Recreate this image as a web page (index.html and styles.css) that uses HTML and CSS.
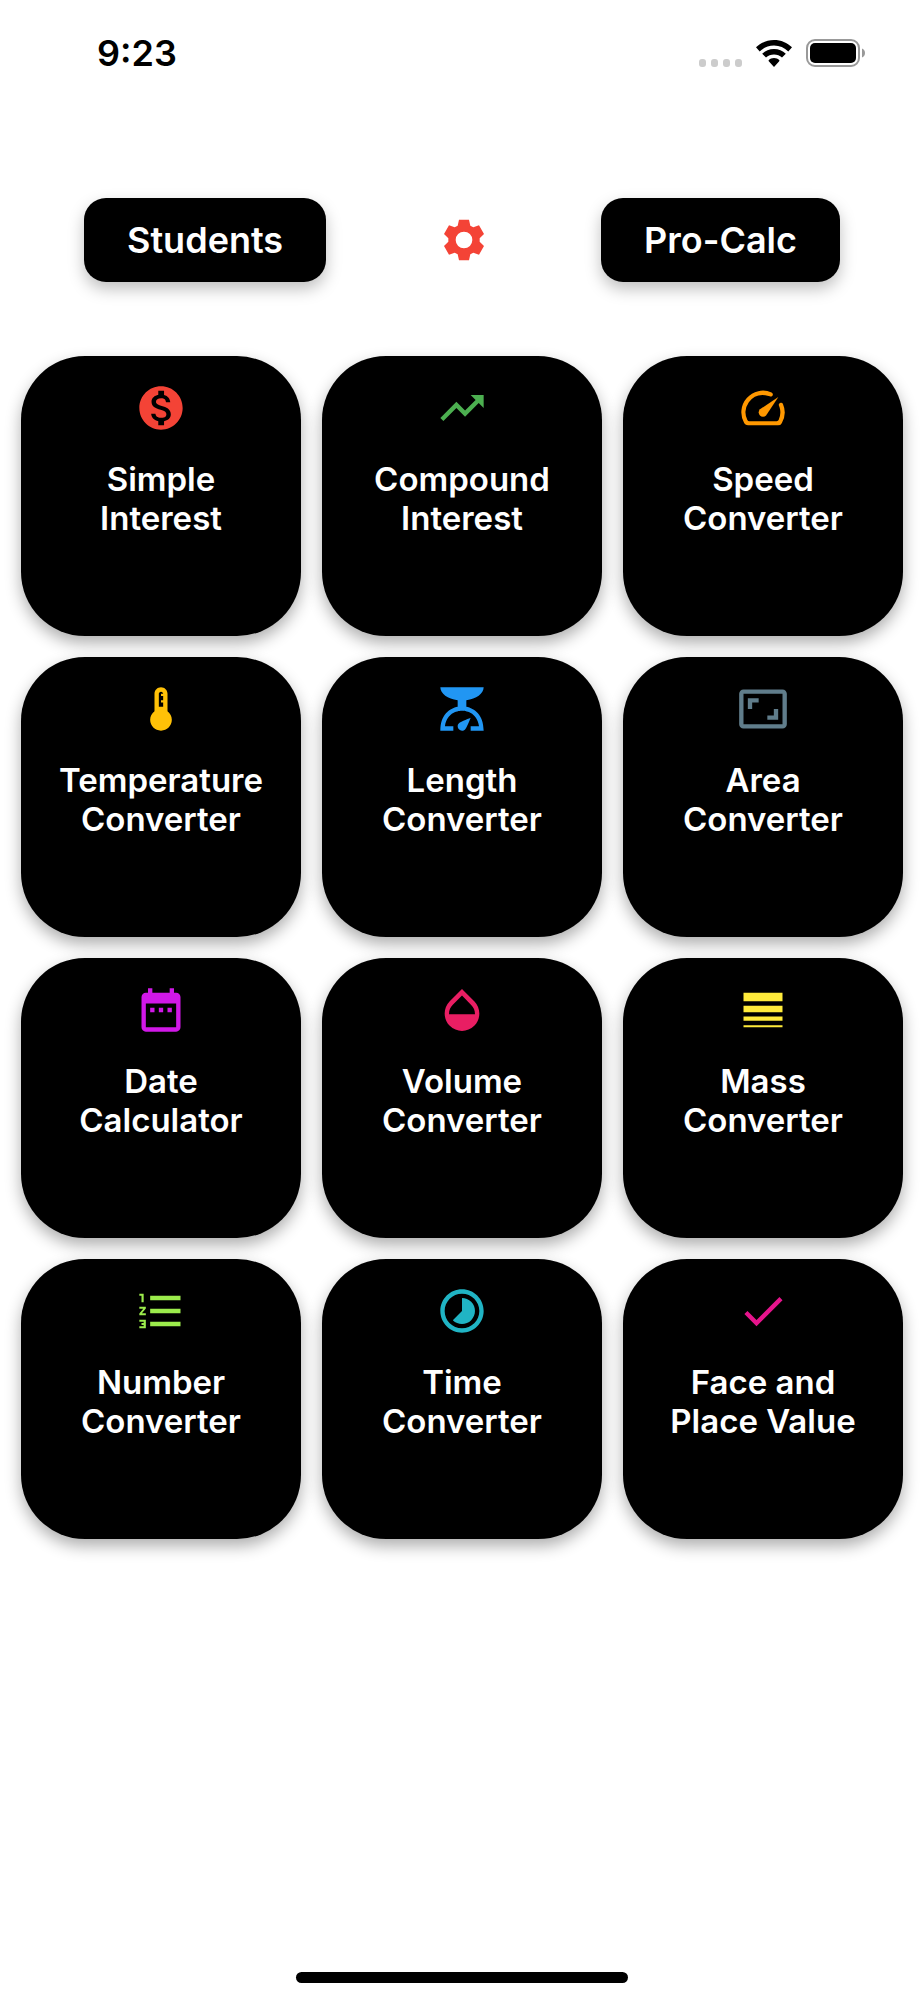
FILE: index.html
```html
<!DOCTYPE html>
<html lang="en">
<head>
    <meta charset="UTF-8">
    <meta name="viewport" content="width=device-width, initial-scale=1.0">
    <title>Calculators</title>
    <link rel="stylesheet" href="styles.css">
</head>
<body>
    <div class="screen">
        <header class="status-bar">
            <span class="time">9:23</span>
            <div class="status-icons">
                <div class="signal"><i></i><i></i><i></i><i></i></div>
                <svg class="wifi" viewBox="0 0 36 27" aria-hidden="true">
                    <path d="M18 0C11 0 4.800 2.700 0 7.300L3.700 11.400C7.500 7.800 12.500 5.600 18 5.600S28.500 7.800 32.300 11.400L36 7.300C31.200 2.700 25 0 18 0z"/>
                    <path d="M18 9C13.400 9 9.300 10.700 6.200 13.700L10 17.600C12.100 15.600 14.900 14.500 18 14.500S23.900 15.600 26 17.600L29.800 13.700C26.700 10.700 22.600 9 18 9z"/>
                    <path d="M18 18C15.900 18 14 18.800 12.600 20.200Q12.500 20.900 13 21.400L18 27L23 21.400Q23.500 20.900 23.400 20.200C22 18.800 20.100 18 18 18z"/>
                </svg>
                <svg class="battery" viewBox="0 0 60 28" aria-hidden="true">
                    <rect x="1" y="1" width="52" height="26" rx="8" fill="none" stroke="#999" stroke-width="2"/>
                    <rect x="4" y="4" width="46" height="20" rx="5"/>
                    <path d="M56 9.500c4 1.500 4 7.500 0 9z" fill="#999"/>
                </svg>
            </div>
        </header>

        <nav class="top-nav">
            <button type="button" class="btn-nav">Students</button>
            <button type="button" class="btn-settings" aria-label="Settings">
                <svg class="gear" viewBox="-66 -66 132 132"><path fill-rule="evenodd" d="M-19-43L-15-61H15L19-43L28-38L45-44L60-18L47-5V5L60 18L45 44L28 38L19 43L15 61H-15L-19 43L-28 38L-45 44L-60 18L-47 5V-5L-60-18L-45-44L-28-38zM0-25A25 25 0 0 0 0 25A25 25 0 0 0 0-25z"/></svg>
            </button>
            <button type="button" class="btn-nav">Pro-Calc</button>
        </nav>

        <main class="grid">
            <button type="button" class="card">
                <svg class="icon red" viewBox="0 0 24 24"><path d="M12 2C6.480 2 2 6.480 2 12s4.480 10 10 10 10-4.480 10-10S17.520 2 12 2zm1.410 16.090V20h-2.670v-1.930c-1.710-.36-3.160-1.460-3.270-3.400h1.960c.1 1.050.82 1.870 2.650 1.870 1.960 0 2.400-.98 2.400-1.590 0-.83-.44-1.610-2.670-2.140-2.480-.6-4.180-1.620-4.180-3.670 0-1.720 1.390-2.840 3.110-3.210V4h2.670v1.950c1.860.45 2.790 1.860 2.850 3.390H14.300c-.05-1.110-.64-1.870-2.220-1.870-1.500 0-2.400.68-2.400 1.640 0 .84.65 1.390 2.670 1.910s4.180 1.390 4.180 3.910c-.01 1.830-1.380 2.830-3.120 3.160z"/></svg>
                <span>Simple Interest</span>
            </button>
            <button type="button" class="card">
                <svg class="icon green" viewBox="0 0 24 24"><path d="M16 6l2.290 2.290-4.880 4.880-4-4L2 16.590 3.410 18l6-6 4 4 6.300-6.290L22 12V6z"/></svg>
                <span>Compound Interest</span>
            </button>
            <button type="button" class="card">
                <svg class="icon orange" viewBox="0 0 24 24"><path d="M19.460 10a1 1 0 0 0-.07 1 7.550 7.550 0 0 1 .52 1.810 8 8 0 0 1-.69 4.730 1 1 0 0 1-.89.53H5.680a1 1 0 0 1-.89-.54A8 8 0 0 1 13 6.060a7.690 7.690 0 0 1 2.110.56 1 1 0 0 0 1-.07 1 1 0 0 0-.17-1.760A10 10 0 0 0 3.350 19a2 2 0 0 0 1.720 1h13.850a2 2 0 0 0 1.740-1 10 10 0 0 0 .55-8.890 1 1 0 0 0-1.750-.11z"/><path d="M10.590 12.590a2 2 0 0 0 0 2.820 2 2 0 0 0 2.830 0l5.660-8.490z"/></svg>
                <span>Speed Converter</span>
            </button>
            <button type="button" class="card">
                <svg class="icon amber" viewBox="0 0 24 24"><path d="M15 13V5c0-1.660-1.340-3-3-3S9 3.340 9 5v8c-1.210.91-2 2.370-2 4 0 2.760 2.240 5 5 5s5-2.240 5-5c0-1.630-.79-3.090-2-4zm-4-8c0-.55.45-1 1-1s1 .45 1 1h-1v1h1v2h-1v1h1v2h-2V5z"/></svg>
                <span>Temperature Converter</span>
            </button>
            <button type="button" class="card">
                <svg class="icon blue" viewBox="0 0 24 24"><path d="M14 11V8c4.560-.58 8-3.100 8-6H2c0 2.900 3.440 5.420 8 6v3c-3.680.73-8 3.610-8 11h6v-2H4.130c.93-6.830 6.650-7.200 7.870-7.200s6.940.37 7.870 7.200H16v2h6c0-7.390-4.320-10.270-8-11z"/><path d="M12 22c-1.100 0-2-.9-2-2 0-.55.22-1.050.59-1.410C11.390 17.790 16 16 16 16s-1.790 4.610-2.590 5.410c-.36.37-.86.59-1.410.59z"/></svg>
                <span>Length Converter</span>
            </button>
            <button type="button" class="card">
                <svg class="icon slate" viewBox="0 0 24 24"><path d="M19 12h-2v3h-3v2h5v-5zM7 9h3V7H5v5h2V9zm14-6H3c-1.100 0-2 .9-2 2v14c0 1.100.9 2 2 2h18c1.100 0 2-.9 2-2V5c0-1.100-.9-2-2-2zm0 16.010H3V4.990h18v14.020z"/></svg>
                <span>Area Converter</span>
            </button>
            <button type="button" class="card">
                <svg class="icon purple" viewBox="0 0 24 24"><path d="M9 11H7v2h2v-2zm4 0h-2v2h2v-2zm4 0h-2v2h2v-2zm2-7h-1V2h-2v2H8V2H6v2H5c-1.110 0-1.990.9-1.990 2L3 20c0 1.100.89 2 2 2h14c1.100 0 2-.9 2-2V6c0-1.100-.9-2-2-2zm0 16H5V9h14v11z"/></svg>
                <span>Date Calculator</span>
            </button>
            <button type="button" class="card">
                <svg class="icon pink" viewBox="0 0 24 24"><path d="M17.660 8L12 2.350 6.340 8C4.780 9.560 4 11.640 4 13.640s.78 4.110 2.340 5.670 3.610 2.350 5.660 2.350 4.100-.79 5.660-2.350S20 15.640 20 13.640 19.220 9.560 17.660 8zM6 14c.01-2 .62-3.270 1.760-4.400L12 5.270l4.240 4.380C17.380 10.770 17.990 12 18 14H6z"/></svg>
                <span>Volume Converter</span>
            </button>
            <button type="button" class="card">
                <svg class="icon yellow" viewBox="0 0 24 24"><path d="M3 17h18v-2H3v2zm0 3h18v-1H3v1zm0-7h18v-3H3v3zm0-9v4h18V4H3z"/></svg>
                <span>Mass Converter</span>
            </button>
            <button type="button" class="card">
                <svg class="icon lime" viewBox="0 0 24 24"><path d="M2 17h2v.5H3v1h1v.5H2v1h3v-4H2v1zm1-9h1V4H2v1h1v3zm-1 3h1.800L2 13.100v.9h3v-1H3.200L5 10.900V10H2v1zm5-6v2h14V5H7zm0 14h14v-2H7v2zm0-6h14v-2H7v2z"/></svg>
                <span>Number Converter</span>
            </button>
            <button type="button" class="card">
                <svg class="icon teal" viewBox="0 0 24 24"><path d="M16.240 7.760C15.070 6.590 13.540 6 12 6v6l-4.240 4.240c2.340 2.340 6.140 2.340 8.490 0 2.340-2.340 2.340-6.140-.01-8.480zM12 2C6.480 2 2 6.480 2 12s4.480 10 10 10 10-4.480 10-10S17.520 2 12 2zm0 18c-4.420 0-8-3.580-8-8s3.580-8 8-8 8 3.580 8 8-3.580 8-8 8z"/></svg>
                <span>Time Converter</span>
            </button>
            <button type="button" class="card">
                <svg class="icon magenta" viewBox="0 0 24 24"><path d="M9 16.170L4.830 12l-1.420 1.410L9 19 21 7l-1.410-1.410z"/></svg>
                <span>Face and Place Value</span>
            </button>
        </main>

        <div class="home-indicator"></div>
    </div>
</body>
</html>
```
FILE: styles.css
```css
* {
    box-sizing: border-box;
}
body {
    margin: 0;
    background: #fff;
    color: #000;
    font-family: Inter, "Liberation Sans", sans-serif;
}
button {
    border: none;
    padding: 0;
    font: inherit;
    cursor: pointer;
}
.screen {
    display: flex;
    flex-direction: column;
    min-height: 100vh;
}
.status-bar {
    display: flex;
    justify-content: space-between;
    align-items: center;
    height: 105px;
    padding: 0 58px 0 97px;
}
.time {
    font-size: 36px;
    font-weight: 600;
}
.status-icons {
    display: flex;
    align-items: flex-end;
    gap: 14px;
}
.signal {
    display: flex;
    gap: 5px;
}
.signal i {
    width: 7px;
    height: 8px;
    border-radius: 3px;
    background: #ccc;
}
.wifi {
    width: 36px;
    height: 27px;
}
.battery {
    width: 60px;
    height: 28px;
}
.top-nav {
    display: flex;
    justify-content: space-between;
    align-items: center;
    padding: 93px 84px 74px;
}
.btn-nav {
    height: 84px;
    padding: 0 43px;
    border-radius: 22px;
    background: #000;
    color: #fff;
    font-size: 36px;
    font-weight: 600;
    box-shadow: 0 7px 16px rgba(0, 0, 0, 0.25);
}
.btn-settings {
    background: none;
    color: #f44336;
}
.gear {
    display: block;
    width: 44px;
    height: 44px;
    fill: currentColor;
}
.icon {
    display: block;
    width: 52px;
    height: 52px;
    fill: currentColor;
}
.grid {
    display: grid;
    grid-template-columns: repeat(3, 1fr);
    gap: 21px;
    padding: 0 21px;
}
.card {
    display: flex;
    flex-direction: column;
    align-items: center;
    gap: 26px;
    aspect-ratio: 1;
    padding: 26px 32px;
    border-radius: 64px;
    background: #000;
    box-shadow: 0 7px 16px rgba(0, 0, 0, 0.32);
}
.card span {
    color: #fff;
    font-size: 33px;
    font-weight: 600;
    line-height: 39px;
}
.red { color: #f44336; }
.green { color: #4caf50; }
.orange { color: #ff9800; }
.amber { color: #ffc107; }
.blue { color: #2196f3; }
.slate { color: #607d8b; }
.purple { color: #d118e8; }
.pink { color: #e91e63; }
.yellow { color: #ffeb3b; }
.lime { color: #9cec4c; }
.teal { color: #20b4c4; }
.magenta { color: #e6148c; }
.home-indicator {
    width: 36%;
    height: 11px;
    margin: auto auto 17px;
    border-radius: 6px;
    background: #000;
}
```
